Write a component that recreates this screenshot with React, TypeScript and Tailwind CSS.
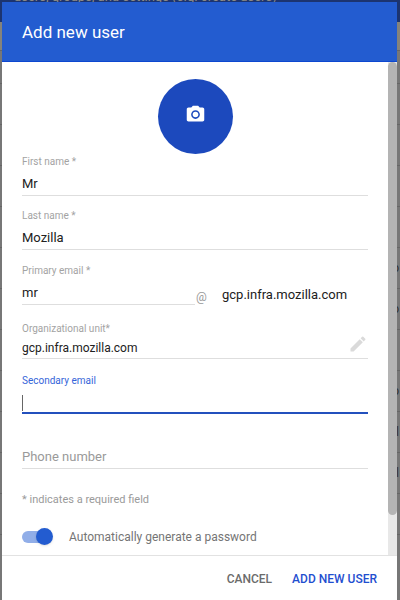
import { MdEdit, MdPhotoCamera } from "react-icons/md";

const line = "w-full border-b border-[#dedede] bg-transparent pt-0.5 text-[13px] text-[#212121] outline-none";
const caption = "block text-[10px] leading-4 text-[#a3a3a3]";

const rows = ["", "", "", "", "o", "o", "", "o", "l", "ll", "", ""];

function Field({ id, label, value }: { id: string; label: string; value: string }) {
  return (
    <div>
      <label htmlFor={id} className={caption}>{label}</label>
      <input id={id} defaultValue={value} className={`${line} block h-[26px]`} />
    </div>
  );
}

function Backdrop() {
  return (
    <div aria-hidden="true" className="absolute inset-0 overflow-hidden bg-[#777777]">
      <div className="flow-root h-[22px] bg-[#1c3470]">
        <p className="-mt-[11px] ml-3.5 whitespace-nowrap text-[13px] leading-4 text-[#8b8b86]">
          users, groups, and settings (e.g. create users)
        </p>
      </div>
      <div className="h-7 bg-[#85837b]" />
      <div className="h-[33px] border-t border-[#666666]" />
      {rows.map((text, index) => (
        <div key={index} className="flex h-[41px] items-center justify-end border-t border-[#666666] pr-px text-xs text-[#303030]">
          {text}
        </div>
      ))}
    </div>
  );
}

export default function App() {
  return (
    <div className="relative min-h-screen bg-[#777777] font-['Roboto',sans-serif]">
      <Backdrop />
      <div role="dialog" aria-labelledby="title" className="relative flex min-h-screen flex-col pt-0.5 pr-[3px] pl-0.5">
        <header className="flex h-[60px] shrink-0 items-center border-b border-[#0d47d0] bg-[#235cd0] px-5">
          <h1 id="title" className="text-[17px] leading-6 text-white">Add new user</h1>
        </header>

        <div className="flex grow bg-white">
          <form className="min-w-0 grow pr-5 pb-[7px] pl-5">
            <button type="button" aria-label="Add photo" className="mx-auto mt-[17px] flex size-[75px] items-center justify-center rounded-full bg-[#1c49bd] pb-1 text-white">
              <MdPhotoCamera className="size-[21px]" />
            </button>

            <div className="flex flex-col gap-3">
              <Field id="first" label="First name *" value="Mr" />
              <Field id="last" label="Last name *" value="Mozilla" />
              <div className="flex items-end pt-px">
                <div className="min-w-0 flex-1">
                  <Field id="primary" label="Primary email *" value="mr" />
                </div>
                <span className="w-[27px] pl-px text-xs leading-4 text-[#9a9a9a]">@</span>
                <span className="w-[146px] pb-0.5 text-[13px] leading-4 text-[#212121]">gcp.infra.mozilla.com</span>
              </div>
            </div>

            <div className="mt-4">
              <label htmlFor="unit" className={caption}>Organizational unit*</label>
              <div className="flex h-[22px] items-center border-b border-[#dedede]">
                <input id="unit" defaultValue="gcp.infra.mozilla.com" className="min-w-0 grow bg-transparent text-xs text-[#212121] outline-none" />
                <button type="button" aria-label="Edit organizational unit" className="pb-2 text-[#dadada]">
                  <MdEdit className="size-5" />
                </button>
              </div>
            </div>

            <div className="mt-3.5">
              <label htmlFor="secondary" className="block text-[10px] leading-4 text-[#3565d9]">Secondary email</label>
              <div className="relative">
                <input id="secondary" type="email" className="block h-[25px] w-full border-b-2 border-[#2350bd] bg-transparent text-[13px] caret-transparent outline-none" />
                <span aria-hidden="true" className="absolute top-1.5 left-0 h-4 w-px bg-[#666666]" />
              </div>
            </div>

            <input aria-label="Phone number" type="tel" placeholder="Phone number" className="mt-[30px] block h-[25px] w-full border-b border-[#dedede] bg-transparent text-[13px] outline-none placeholder:text-[#9a9a9a]" />

            <p className="mt-[23px] text-[11px] leading-4 text-[#9a9a9a]">* indicates a required field</p>

            <label className="mt-5 flex h-[18px] items-center gap-[18px] text-xs text-[#757575]">
              <input
                type="checkbox"
                defaultChecked
                className="relative h-3 w-[29px] shrink-0 appearance-none rounded-full bg-[#91aee8] before:absolute before:-top-[3px] before:left-[14px] before:size-[17px] before:rounded-full before:bg-[#235cd0] before:shadow-sm"
              />
              Automatically generate a password
            </label>
          </form>
          <div aria-hidden="true" className="w-[9px] shrink-0 bg-[#e8e8e8]">
            <div className="h-[453px] rounded-full bg-[#b4b4b4]" />
          </div>
        </div>

        <footer className="flex h-[45px] shrink-0 items-center justify-end gap-5 border-t border-[#e2e2e2] bg-white pt-0.5 pr-5 text-xs font-medium">
          <button type="button" className="text-[#6b6b6b]">CANCEL</button>
          <button type="button" className="text-[#1f4fd0]">ADD NEW USER</button>
        </footer>
      </div>
    </div>
  );
}
